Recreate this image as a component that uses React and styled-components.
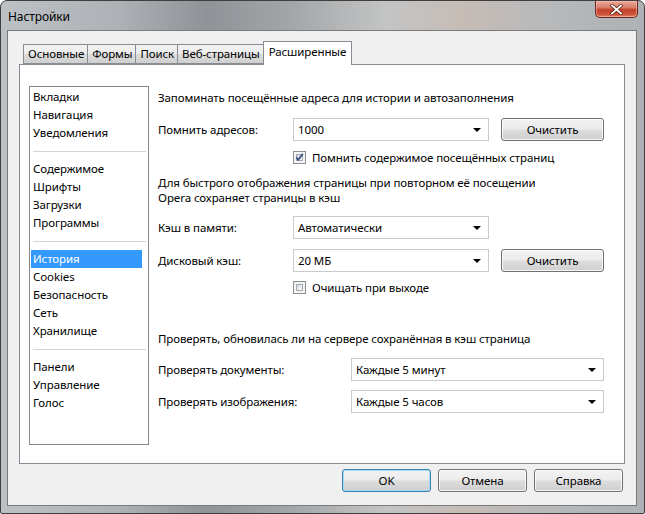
import React from 'react';
import styled, { createGlobalStyle } from 'styled-components';

const GlobalStyle = createGlobalStyle`
  html, body {
    margin: 0;
    padding: 0;
    background: #ffffff;
  }
  body {
    font-family: "Segoe UI", "Noto Sans", "DejaVu Sans", sans-serif;
    font-size: 11.5px;
    letter-spacing: -0.1px;
    color: #000;
  }
`;

const Window = styled.div`
  width: 645px;
  height: 514px;
  box-sizing: border-box;
  border: 1px solid #3f3f3f;
  border-radius: 7px 7px 2px 2px;
  background: linear-gradient(
    90deg,
    #bcc1c5 0%,
    #aeb2b6 18%,
    #8f9397 32%,
    #a3a6a9 45%,
    #c3c4c4 60%,
    #c6bcb6 72%,
    #b7b9bb 85%,
    #aeb2b5 100%
  );
  display: flex;
  flex-direction: column;
  overflow: hidden;
`;

const TitleBar = styled.div`
  height: 29px;
  display: flex;
  align-items: flex-start;
  flex-shrink: 0;
`;

const Title = styled.div`
  padding: 8px 0 0 7px;
  font-size: 12px;
  line-height: 15px;
  color: #000;
`;

const CloseButton = styled.div`
  margin-left: auto;
  margin-right: 6px;
  width: 43px;
  height: 17px;
  box-sizing: border-box;
  border: 1px solid #6b2a22;
  border-top: none;
  border-radius: 0 0 5px 5px;
  background: linear-gradient(180deg, #e9a99b 0%, #d9806c 40%, #c2402a 55%, #d0553d 85%, #e08a70 100%);
  display: flex;
  align-items: center;
  justify-content: center;
  box-shadow: inset 0 0 0 1px rgba(255, 200, 190, 0.5);
`;

const Client = styled.div`
  flex: 1;
  margin: 0 7px 7px 6px;
  border: 1px solid #7a7a7a;
  background: #f0f0f0;
  display: flex;
  flex-direction: column;
`;

const TabStrip = styled.div`
  display: flex;
  align-items: flex-end;
  height: 23px;
  margin: 10px 0 0 15px;
  position: relative;
  z-index: 1;
`;

const Tab = styled.div`
  box-sizing: border-box;
  height: ${(p) => (p.$active ? '24px' : '20px')};
  margin-bottom: ${(p) => (p.$active ? '-1px' : '0')};
  margin-right: -1px;
  padding: ${(p) => (p.$active ? '0 5px' : '0 3px 0 4px')};
  border: 1px solid #898c95;
  border-bottom: ${(p) => (p.$active ? 'none' : '1px solid #898c95')};
  background: ${(p) =>
    p.$active ? '#ffffff' : 'linear-gradient(180deg, #f2f2f2 0%, #ebebeb 50%, #dddddd 51%, #cfcfcf 100%)'};
  line-height: ${(p) => (p.$active ? '20px' : '18px')};
  white-space: nowrap;
`;

const Panel = styled.div`
  box-sizing: border-box;
  height: 400px;
  margin: 0 11px;
  border: 1px solid #898c95;
  background: #ffffff;
  display: flex;
  padding: 21px 10px 0 9px;
`;

const SideList = styled.div`
  box-sizing: border-box;
  width: 120px;
  height: 359px;
  border: 1px solid #828790;
  padding-top: 1px;
  flex-shrink: 0;
`;

const SideItem = styled.div`
  height: 18px;
  line-height: 18px;
  margin: 0 6px 0 1px;
  padding-left: 2px;
  background: ${(p) => (p.$selected ? '#3399ff' : 'transparent')};
  color: ${(p) => (p.$selected ? '#ffffff' : '#000')};
  white-space: nowrap;
`;

const SideSeparator = styled.div`
  height: 18px;
  display: flex;
  align-items: center;
  padding: 0 2px 0 3px;
  &::after {
    content: '';
    flex: 1;
    height: 1px;
    background: #d4d4d4;
  }
`;

const Content = styled.div`
  margin-left: 9px;
  display: flex;
  flex-direction: column;
  flex: 1;
`;

const Heading = styled.div`
  margin-top: ${(p) => p.$top}px;
  line-height: 16px;
  white-space: nowrap;
`;

const HeadingLine = styled.div`
  height: 15px;
  line-height: 15px;
  white-space: nowrap;
`;

const Row = styled.div`
  margin-top: ${(p) => p.$top}px;
  display: flex;
  align-items: center;
  height: 23px;
`;

const Label = styled.div`
  width: ${(p) => p.$w}px;
  flex-shrink: 0;
  white-space: nowrap;
`;

const Combo = styled.div`
  box-sizing: border-box;
  width: ${(p) => p.$w}px;
  height: 23px;
  border: 1px solid #c9cacc;
  background: #ffffff;
  display: flex;
  align-items: center;
  padding: 0 7px 0 4px;
  white-space: nowrap;
`;

const ComboText = styled.span`
  flex: 1;
`;

const Arrow = styled.span`
  width: 0;
  height: 0;
  border-left: 4px solid transparent;
  border-right: 4px solid transparent;
  border-top: 4px solid #000;
  margin-top: 1px;
`;

const Button = styled.div`
  box-sizing: border-box;
  width: ${(p) => p.$w}px;
  height: 23px;
  margin-left: ${(p) => p.$ml || 0}px;
  border: 1px solid ${(p) => (p.$default ? '#3c7fb1' : '#707070')};
  border-radius: 3px;
  background: linear-gradient(180deg, #f2f2f2 0%, #ebebeb 48%, #dddddd 52%, #cfcfcf 100%);
  box-shadow: inset 0 0 0 1px ${(p) => (p.$default ? '#a3dbf5' : 'rgba(255,255,255,0.8)')};
  display: flex;
  align-items: center;
  justify-content: center;
  white-space: nowrap;
`;

const CheckRow = styled.div`
  margin-top: ${(p) => p.$top}px;
  margin-left: 135px;
  height: 16px;
  display: flex;
  align-items: center;
  gap: 6px;
  white-space: nowrap;
`;

const Box = styled.span`
  box-sizing: border-box;
  width: 13px;
  height: 13px;
  border: 1px solid #8e8f8f;
  background: #f4f4f4;
  padding: 2px;
  display: flex;
  flex-shrink: 0;
  position: relative;
`;

const BoxInner = styled.span`
  flex: 1;
  border: 1px solid #a7acb3;
  background: linear-gradient(135deg, #cdd1d6 0%, #eef0f2 60%, #f8f8f8 100%);
`;

const CheckMark = styled.svg`
  position: absolute;
  left: 0;
  top: 0;
`;

const Footer = styled.div`
  display: flex;
  justify-content: flex-end;
  gap: 7px;
  padding: 5px 13px 0 0;
`;

const Check = ({ checked, children, top }) => (
  <CheckRow $top={top}>
    <Box>
      <BoxInner />
      {checked && (
        <CheckMark width="11" height="11" viewBox="0 0 11 11">
          <path d="M2.2 5.4 L4.3 7.9 L8.8 1.9" fill="none" stroke="#3b5685" strokeWidth="1.8" />
        </CheckMark>
      )}
    </Box>
    <span>{children}</span>
  </CheckRow>
);

const Select = ({ w, children }) => (
  <Combo $w={w}>
    <ComboText>{children}</ComboText>
    <Arrow />
  </Combo>
);

const groups = [
  ['Вкладки', 'Навигация', 'Уведомления'],
  ['Содержимое', 'Шрифты', 'Загрузки', 'Программы'],
  ['История', 'Cookies', 'Безопасность', 'Сеть', 'Хранилище'],
  ['Панели', 'Управление', 'Голос'],
];

const tabs = ['Основные', 'Формы', 'Поиск', 'Веб-страницы', 'Расширенные'];

export default function App() {
  return (
    <>
      <GlobalStyle />
      <Window>
        <TitleBar>
          <Title>Настройки</Title>
          <CloseButton>
            <svg width="13" height="11" viewBox="0 0 13 11">
              <path d="M2 1.5 L11 9.5 M11 1.5 L2 9.5" stroke="#5a1a12" strokeWidth="3.4" strokeLinecap="square" />
              <path d="M2 1.5 L11 9.5 M11 1.5 L2 9.5" stroke="#ffffff" strokeWidth="1.9" strokeLinecap="square" />
            </svg>
          </CloseButton>
        </TitleBar>
        <Client>
          <TabStrip>
            {tabs.map((t, i) => (
              <Tab key={t} $active={i === tabs.length - 1}>
                {t}
              </Tab>
            ))}
          </TabStrip>
          <Panel>
            <SideList>
              {groups.map((g, gi) => (
                <React.Fragment key={gi}>
                  {gi > 0 && <SideSeparator />}
                  {g.map((item) => (
                    <SideItem key={item} $selected={item === 'История'}>
                      {item}
                    </SideItem>
                  ))}
                </React.Fragment>
              ))}
            </SideList>
            <Content>
              <Heading $top={4}>Запоминать посещённые адреса для истории и автозаполнения</Heading>
              <Row $top={12}>
                <Label $w={135}>Помнить адресов:</Label>
                <Select w={196}>1000</Select>
                <Button $w={103} $ml={12}>Очистить</Button>
              </Row>
              <Check checked top={8}>Помнить содержимое посещённых страниц</Check>
              <Heading $top={10}>
                <HeadingLine>Для быстрого отображения страницы при повторном её посещении</HeadingLine>
                <HeadingLine>Opera сохраняет страницы в кэш</HeadingLine>
              </Heading>
              <Row $top={11}>
                <Label $w={135}>Кэш в памяти:</Label>
                <Select w={196}>Автоматически</Select>
              </Row>
              <Row $top={10}>
                <Label $w={135}>Дисковый кэш:</Label>
                <Select w={196}>20 МБ</Select>
                <Button $w={103} $ml={12}>Очистить</Button>
              </Row>
              <Check top={7}>Очищать при выходе</Check>
              <Heading $top={36}>Проверять, обновилась ли на сервере сохранённая в кэш страница</Heading>
              <Row $top={11}>
                <Label $w={193}>Проверять документы:</Label>
                <Select w={253}>Каждые 5 минут</Select>
              </Row>
              <Row $top={9}>
                <Label $w={193}>Проверять изображения:</Label>
                <Select w={253}>Каждые 5 часов</Select>
              </Row>
            </Content>
          </Panel>
          <Footer>
            <Button $w={89} $default>OK</Button>
            <Button $w={89}>Отмена</Button>
            <Button $w={89}>Справка</Button>
          </Footer>
        </Client>
      </Window>
    </>
  );
}
